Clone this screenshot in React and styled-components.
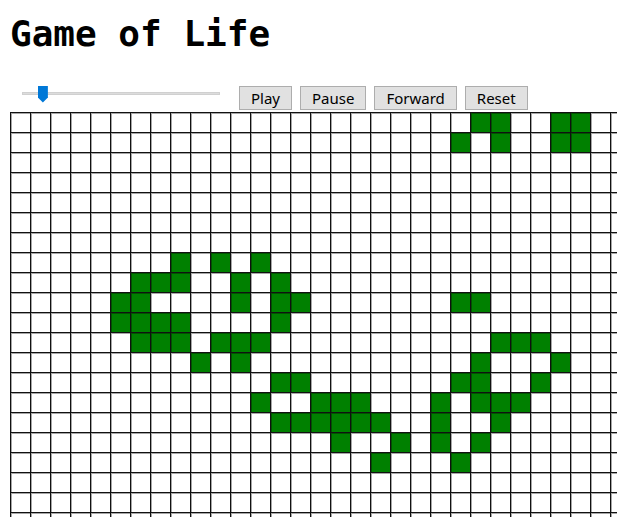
import React, { useState } from 'react';
import styled, { createGlobalStyle } from 'styled-components';

const COLS = 31;
const ROWS = 21;

// live cells as [row, col]
const START = [
  [0, 23], [0, 24], [0, 27], [0, 28],
  [1, 22], [1, 24], [1, 27], [1, 28],
  [7, 8], [7, 10], [7, 12],
  [8, 6], [8, 7], [8, 8], [8, 11], [8, 13],
  [9, 5], [9, 6], [9, 11], [9, 13], [9, 14], [9, 22], [9, 23],
  [10, 5], [10, 6], [10, 7], [10, 8], [10, 13],
  [11, 6], [11, 7], [11, 8], [11, 10], [11, 11], [11, 12], [11, 24], [11, 25], [11, 26],
  [12, 9], [12, 11], [12, 23], [12, 27],
  [13, 13], [13, 14], [13, 22], [13, 23], [13, 26],
  [14, 12], [14, 15], [14, 16], [14, 17], [14, 21], [14, 23], [14, 24], [14, 25],
  [15, 13], [15, 14], [15, 15], [15, 16], [15, 17], [15, 18], [15, 21], [15, 24],
  [16, 16], [16, 19], [16, 21], [16, 23],
  [17, 18], [17, 22],
];

const GlobalStyle = createGlobalStyle`
  html, body {
    margin: 0;
    overflow: hidden;
    background: #fff;
  }
`;

const Page = styled.div`
  padding-left: 10px;
`;

const Title = styled.h1`
  margin: 13px 0 0;
  font-family: "DejaVu Sans Mono", "Liberation Mono", monospace;
  font-size: 36px;
  font-weight: bold;
  line-height: 42px;
  color: #000;
`;

const Controls = styled.div`
  display: flex;
  align-items: flex-start;
  height: 24px;
  margin-top: 31px;
  padding-left: 12px;
`;

const Slider = styled.input`
  -webkit-appearance: none;
  appearance: none;
  width: 198px;
  height: 18px;
  margin: -2px 19px 0 0;
  padding: 0;
  background: transparent;
  &::-webkit-slider-runnable-track {
    height: 3px;
    background: #dcdcdc;
    border: 1px solid #d0d0d0;
    box-sizing: border-box;
  }
  &::-webkit-slider-thumb {
    -webkit-appearance: none;
    width: 10px;
    height: 17px;
    margin-top: -7px;
    background: #0078d7;
    border: none;
    clip-path: polygon(0 0, 100% 0, 100% 70%, 50% 100%, 0 70%);
  }
`;

const Button = styled.button`
  height: 24px;
  margin-right: 8px;
  padding: 0 11px;
  border: 1px solid #adadad;
  border-radius: 0;
  background: #e1e1e1;
  font-family: "Noto Sans", "Open Sans", sans-serif;
  font-size: 15px;
  line-height: 20px;
  color: #000;
  cursor: pointer;
`;

const Board = styled.div`
  display: grid;
  grid-template-columns: repeat(${COLS}, 20px);
  grid-auto-rows: 20px;
  margin-top: 2px;
  width: max-content;
`;

const Cell = styled.div`
  box-sizing: border-box;
  border-left: 1px solid #111;
  border-top: 1px solid #111;
  background: ${(p) => (p.$alive ? '#008000' : '#fff')};
  box-shadow: inset 1px 1px 0 rgba(0, 0, 0, 0.35);
`;

export default function App() {
  const [speed, setSpeed] = useState(8);
  const [alive] = useState(() => new Set(START.map(([r, c]) => r * COLS + c)));

  return (
    <Page>
      <GlobalStyle />
      <Title>Game of Life</Title>
      <Controls>
        <Slider
          type="range"
          min="0"
          max="100"
          value={speed}
          onChange={(e) => setSpeed(Number(e.target.value))}
        />
        <Button>Play</Button>
        <Button>Pause</Button>
        <Button>Forward</Button>
        <Button>Reset</Button>
      </Controls>
      <Board>
        {Array.from({ length: ROWS * COLS }, (_, i) => (
          <Cell key={i} $alive={alive.has(i)} />
        ))}
      </Board>
    </Page>
  );
}
